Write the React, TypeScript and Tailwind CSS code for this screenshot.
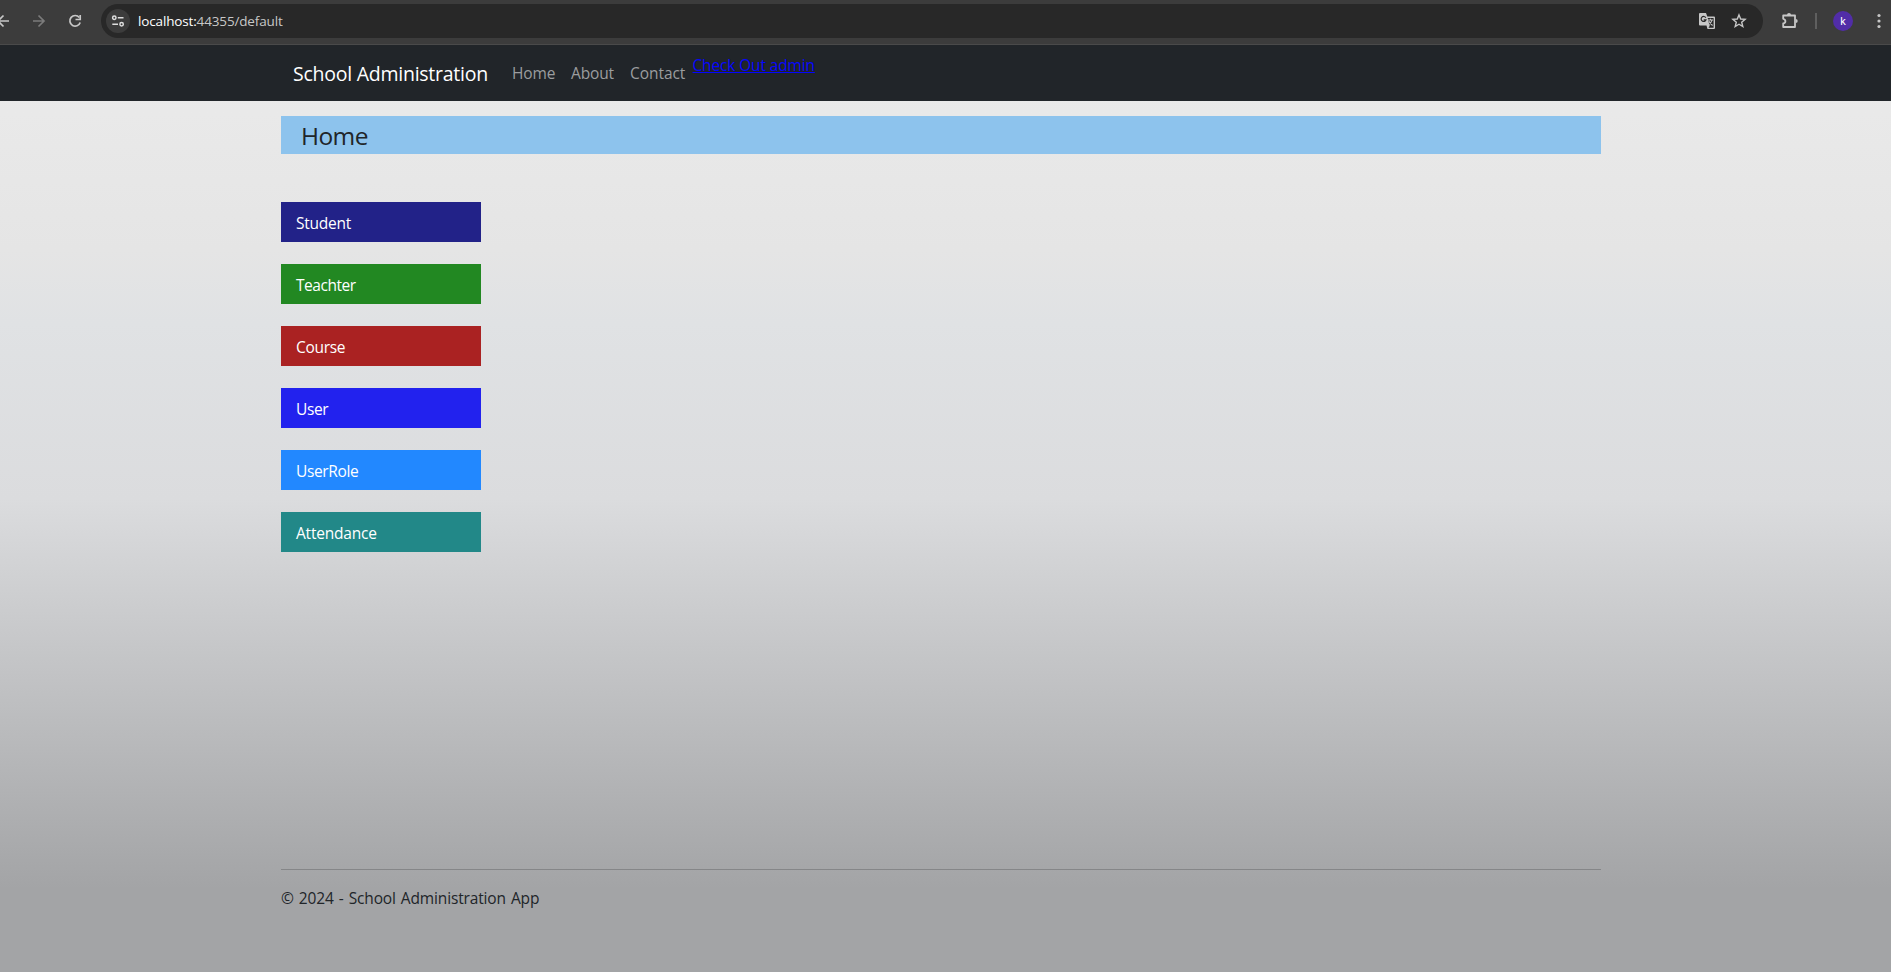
import React from "react";

const cards = [
  { label: "Student", color: "bg-[#222288]", tracking: "tracking-[-0.25px]" },
  { label: "Teachter", color: "bg-[#228822]", tracking: "tracking-[-0.45px]" },
  { label: "Course", color: "bg-[#aa2222]", tracking: "tracking-[-0.3px]" },
  { label: "User", color: "bg-[#2222ee]", tracking: "tracking-[-0.4px]" },
  { label: "UserRole", color: "bg-[#2288ff]", tracking: "tracking-[-0.35px]" },
  { label: "Attendance", color: "bg-[#228888]", tracking: "tracking-[-0.2px]" },
];

function BrowserBar() {
  return (
    <div className="flex h-[45px] shrink-0 items-start border-b border-[#4a4a4a] bg-[#3c3c3c] pt-1 text-[#c7c7c7]">
      <div className="flex h-[34px] w-[101px] shrink-0 items-center">
        <svg width="101" height="34" viewBox="0 0 101 34" fill="none" strokeWidth="1.7">
          <path d="M9 17H-3M3.5 11.5L-2 17L3.5 22.500" stroke="#c7c7c7" />
          <path d="M33 17H44M38.500 11.500L44 17L38.500 22.500" stroke="#7b7b7b" />
          <path d="M79.300 13.500A5.300 5.300 0 1 0 80.200 18.500" stroke="#c7c7c7" />
          <path d="M80.200 11V15.500H75.500" stroke="#c7c7c7" />
        </svg>
      </div>
      <div className="flex h-[34px] w-[1662px] shrink-0 items-center rounded-full bg-[#282828] pl-[5px]">
        <div className="flex size-6 shrink-0 items-center justify-center rounded-full bg-[#3c3c3c]">
          <svg width="14" height="14" viewBox="0 0 14 14" fill="none" stroke="#dedede" strokeWidth="1.5">
            <circle cx="3.300" cy="3.800" r="1.700" />
            <path d="M6.800 3.800H12.500M1.300 10.200H7" />
            <circle cx="10.600" cy="10.200" r="1.700" />
          </svg>
        </div>
        <div className="ml-2 flex-1 whitespace-nowrap text-[13.5px] leading-5 tracking-[-0.15px]">
          <span className="text-white">localhost:</span>44355/default
        </div>
        <svg className="mr-[15px] shrink-0" width="18" height="18" viewBox="0 0 18 18" fill="none">
          <path d="M2 1H8L9.300 4.500H16Q17 4.500 17 5.500V16Q17 17 16 17H9.500L8.500 13.500H2Q1 13.500 1 12.500V2Q1 1 2 1Z" fill="#c7c7c7" />
          <path d="M9.700 6H15.600V15.700H10.500L12 13.500H11.500Z" fill="#282828" />
          <path d="M7.800 5.700A2.500 2.500 0 1 0 8 7.800H5.700" stroke="#282828" strokeWidth="1.200" />
          <path d="M9.800 8H15M12.400 6.700V8M14 8Q13.300 11 10.500 12.800M11 9.300Q12.300 12 14.600 13.500" stroke="#c7c7c7" strokeWidth="1.100" />
        </svg>
        <svg className="mr-[16px] shrink-0" width="16" height="16" viewBox="0 0 16 16" fill="none" stroke="#c7c7c7" strokeWidth="1.400">
          <path d="M8 1.900L9.700 6L14.100 6.300L10.700 9.200L11.800 13.500L8 11.200L4.200 13.500L5.300 9.200L1.900 6.300L6.300 6Z" />
        </svg>
      </div>
      <div className="flex h-[34px] flex-1 items-center">
        <svg className="ml-[18px] shrink-0" width="18" height="18" viewBox="0 0 18 18" fill="none">
          <path d="M2.200 3.500H14V15H2.200V11.500Q4.400 11 4.400 9.200Q4.400 7.300 2.200 6.800Z" stroke="#c7c7c7" strokeWidth="1.800" strokeLinejoin="round" />
          <path d="M6 3A2 2 0 0 1 10 3ZM14.700 7A2 2 0 0 1 14.700 11Z" fill="#c7c7c7" />
        </svg>
        <div className="ml-[16px] h-4 w-[2px] shrink-0 bg-[#5f5f5f]" />
        <div className="ml-4 flex size-5 shrink-0 items-center justify-center rounded-full bg-[#512da8] font-[Roboto] text-[11px] leading-none text-white">
          k
        </div>
        <svg className="ml-6 shrink-0" width="4" height="16" viewBox="0 0 4 16" fill="#c7c7c7">
          <circle cx="2" cy="2.500" r="1.600" />
          <circle cx="2" cy="8" r="1.600" />
          <circle cx="2" cy="13.500" r="1.600" />
        </svg>
      </div>
    </div>
  );
}

function Navbar() {
  return (
    <nav className="flex h-14 shrink-0 items-start bg-[#212529] pl-[293px] whitespace-nowrap">
      <a className="w-[219px] pt-[14px] text-[19.5px] leading-[30px] tracking-[-0.25px] text-white">School Administration</a>
      <a className="w-[59px] pt-4 text-[15.5px] leading-6 tracking-[-0.15px] text-[#9b9d9f]">Home</a>
      <a className="w-[59px] pt-4 text-[15.5px] leading-6 tracking-[-0.15px] text-[#9b9d9f]">About</a>
      <a className="w-[62.5px] pt-4 text-[15.5px] leading-6 tracking-[-0.05px] text-[#9b9d9f]">Contact</a>
      <a className="pt-2 text-[15.5px] leading-6 tracking-[-0.15px] text-[#0505ff] underline">Check Out admin</a>
    </nav>
  );
}

export default function App() {
  return (
    <div className="flex h-[972px] flex-col overflow-hidden font-['Open_Sans','Noto_Sans',sans-serif] text-[#212529]">
      <BrowserBar />
      <div className="flex flex-1 flex-col bg-[linear-gradient(to_bottom,#ebebeb_0%,#e5e5e5_22%,#e0e2e4_30%,#dbdcde_49%,#a3a4a6_91%,#a3a4a6_100%)]">
        <Navbar />
        <main className="ml-[281px] flex w-[1320px] flex-1 flex-col pt-[15px]">
          <h1 className="h-[38px] bg-[#8dc3ed] pl-5 text-[24.5px] leading-[39px] font-normal tracking-[-0.6px]">Home</h1>
          <div className="mt-12 flex h-[667px] flex-col gap-[22px]">
            {cards.map((card) => (
              <a
                key={card.label}
                className={`h-10 w-[200px] pt-[9px] pl-[15px] text-[15.5px] leading-6 text-white ${card.color} ${card.tracking}`}
              >
                {card.label}
              </a>
            ))}
          </div>
          <footer className="h-[103px] border-t border-[#858688] pt-4 text-[15.5px] leading-6 tracking-[-0.15px] [word-spacing:1.2px]">
            © 2024 - School Administration App
          </footer>
        </main>
      </div>
    </div>
  );
}
